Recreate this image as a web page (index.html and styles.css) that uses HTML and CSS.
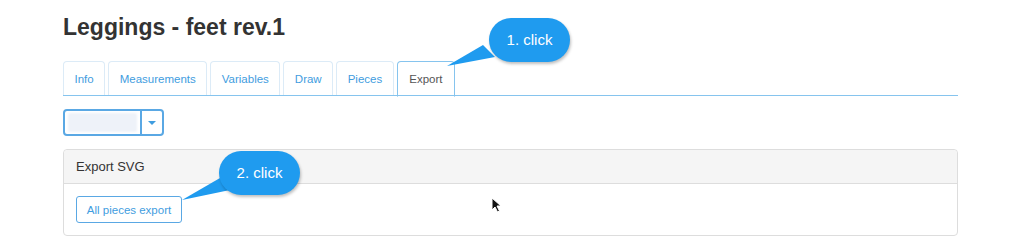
FILE: index.html
```html
<!DOCTYPE html>
<html>
<head>
<meta charset="utf-8">
<link rel="stylesheet" href="styles.css">
</head>
<body>
<div class="page">
  <h1 class="title">Leggings - feet rev.1</h1>
  <ul class="tabs">
    <li class="tab">Info</li>
    <li class="tab">Measurements</li>
    <li class="tab">Variables</li>
    <li class="tab">Draw</li>
    <li class="tab">Pieces</li>
    <li class="tab active">Export</li>
  </ul>
  <div class="split">
    <div class="split-main"><div class="blur"></div></div>
    <div class="split-caret"><span class="caret"></span></div>
  </div>
  <div class="panel">
    <div class="panel-head">Export SVG</div>
    <div class="panel-body">
      <button class="btn">All pieces export</button>
    </div>
  </div>
</div>

<div class="callout callout-1">
  <svg class="tail" width="60" height="40" viewBox="0 0 60 40"><polygon points="0,37 36,16 48,28" fill="#1f9bef"/></svg>
  <div class="bubble">1. click</div>
</div>
<div class="callout callout-2">
  <svg class="tail" width="60" height="40" viewBox="0 0 60 40"><polygon points="0,40 38,18 48,30" fill="#1f9bef"/></svg>
  <div class="bubble">2. click</div>
</div>

<svg class="cursor" width="12" height="17" viewBox="0 0 12 17"><path d="M1 1 L1 13 L4 10 L6.5 15 L8.5 14 L6 9 L10 9 Z" fill="#111" stroke="#fff" stroke-width="1"/></svg>
</body>
</html>
```

FILE: styles.css
```css
html, body {
  margin: 0;
  padding: 0;
  background: #fff;
  font-family: "Liberation Sans", Arial, sans-serif;
}
.page {
  width: 895px;
  padding: 12px 0 0 63px;
}
.title {
  margin: 0;
  font-size: 23px;
  font-weight: bold;
  color: #333;
  line-height: 30px;
  height: 49px;
}
.tabs {
  list-style: none;
  margin: 0;
  padding: 0;
  display: flex;
  border-bottom: 1px solid #86c4ee;
  height: 34px;
}
.tab {
  margin-right: 3px;
  padding: 0 10.5px;
  height: 33px;
  line-height: 34px;
  font-size: 11.5px;
  color: #3f9de0;
  border: 1px solid #dcebf7;
  border-bottom: none;
  border-radius: 4px 4px 0 0;
}
.tab.active {
  color: #555;
  border: 1px solid #86c4ee;
  border-bottom: 1px solid #fff;
  height: 34px;
  margin-bottom: -1px;
  padding: 0 11.5px;
}
.split {
  margin-top: 13px;
  display: flex;
  width: 101px;
  height: 27px;
}
.split-main {
  width: 79px;
  border: 2px solid #5aa8e4;
  border-radius: 4px 0 0 4px;
  padding: 2px 3px;
  box-sizing: border-box;
}
.blur {
  height: 19px;
  background: #eef2f9;
  border-radius: 2px;
  filter: blur(1px);
}
.split-caret {
  flex: 1;
  border: 2px solid #5aa8e4;
  border-left: none;
  border-radius: 0 4px 4px 0;
  display: flex;
  align-items: center;
  justify-content: center;
}
.caret {
  width: 0;
  height: 0;
  border-left: 4px solid transparent;
  border-right: 4px solid transparent;
  border-top: 4px solid #3f9de0;
}
.panel {
  margin-top: 13px;
  border: 1px solid #ddd;
  border-radius: 4px;
  height: 87px;
  box-sizing: border-box;
}
.panel-head {
  background: #f5f5f5;
  border-bottom: 1px solid #ddd;
  border-radius: 4px 4px 0 0;
  height: 33px;
  line-height: 33px;
  padding-left: 12px;
  font-size: 13px;
  color: #333;
}
.panel-body {
  padding: 12px 12px;
}
.btn {
  font-family: "Liberation Sans", Arial, sans-serif;
  font-size: 11.5px;
  color: #3f9de0;
  background: #fff;
  border: 1.5px solid #5aa8e4;
  border-radius: 3px;
  height: 27px;
  width: 106px;
  padding: 0;
}
.callout {
  position: absolute;
}
.callout .tail {
  position: absolute;
}
.bubble {
  position: relative;
  width: 81px;
  height: 44px;
  border-radius: 22px;
  background: #1f9bef;
  color: #fff;
  font-size: 15px;
  line-height: 44px;
  text-align: center;
  box-shadow: 1px 2px 3px rgba(0,0,0,0.25);
}
.callout-1 {
  left: 489px;
  top: 18px;
}
.callout-1 .tail {
  left: -42px;
  top: 11px;
}
.callout-2 {
  left: 219px;
  top: 151px;
}
.callout-2 .tail {
  left: -37px;
  top: 9px;
}
.cursor {
  position: absolute;
  left: 491px;
  top: 197px;
}
```
